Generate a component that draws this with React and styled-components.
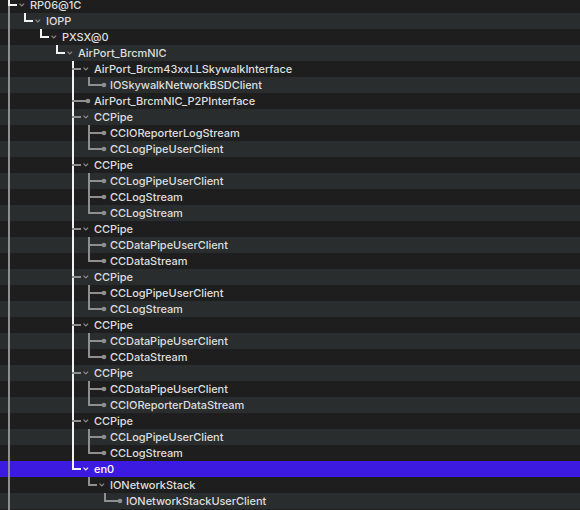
import React from "react";
import styled, { createGlobalStyle } from "styled-components";

const GlobalStyle = createGlobalStyle`
  html, body {
    margin: 0;
    padding: 0;
    background: #1e1e1e;
    overflow: hidden;
  }
  #root { width: 580px; height: 510px; overflow: hidden; }
`;

const WHITE = "#f2f2f2";
const GRAY = "#8f8f8f";

const tree = {
  name: "RP06@1C",
  hasMoreAfter: true,
  children: [
    {
      name: "IOPP",
      children: [
        {
          name: "PXSX@0",
          children: [
            {
              name: "AirPort_BrcmNIC",
              children: [
                { name: "AirPort_Brcm43xxLLSkywalkInterface", children: [{ name: "IOSkywalkNetworkBSDClient" }] },
                { name: "AirPort_BrcmNIC_P2PInterface" },
                { name: "CCPipe", children: [{ name: "CCIOReporterLogStream" }, { name: "CCLogPipeUserClient" }] },
                { name: "CCPipe", children: [{ name: "CCLogPipeUserClient" }, { name: "CCLogStream" }, { name: "CCLogStream" }] },
                { name: "CCPipe", children: [{ name: "CCDataPipeUserClient" }, { name: "CCDataStream" }] },
                { name: "CCPipe", children: [{ name: "CCLogPipeUserClient" }, { name: "CCLogStream" }] },
                { name: "CCPipe", children: [{ name: "CCDataPipeUserClient" }, { name: "CCDataStream" }] },
                { name: "CCPipe", children: [{ name: "CCDataPipeUserClient" }, { name: "CCIOReporterDataStream" }] },
                { name: "CCPipe", children: [{ name: "CCLogPipeUserClient" }, { name: "CCLogStream" }] },
                {
                  name: "en0",
                  selected: true,
                  children: [{ name: "IONetworkStack", children: [{ name: "IONetworkStackUserClient" }] }],
                },
              ],
            },
          ],
        },
      ],
    },
  ],
};

function flatten() {
  const rows = [];
  const walk = (node, depth, parent, index, siblings, ancestors) => {
    const n = {
      name: node.name,
      depth,
      parent,
      index,
      leaf: !node.children,
      selected: !!node.selected,
      hasLater: node.hasMoreAfter || index < siblings - 1,
      ancestors,
    };
    rows.push(n);
    (node.children || []).forEach((c, i, arr) =>
      walk(c, depth + 1, n, i, arr.length, [...ancestors, n])
    );
  };
  walk(tree, 0, null, 0, 2, []);
  return rows;
}

const rows = flatten();
const sel = rows.find((r) => r.selected);
const path = [...sel.ancestors, sel];

const laterOnPath = (node) => {
  const p = path[node.depth];
  return p && p !== node && p.parent === node.parent && p.index > node.index;
};

const List = styled.div`
  display: flex;
  flex-direction: column;
  margin-top: -3px;
  font-family: Inter, "Liberation Sans", sans-serif;
  font-size: 11px;
  font-weight: 500;
`;

const Row = styled.div`
  display: flex;
  align-items: center;
  height: 16px;
  flex: none;
  background: ${(p) => (p.$selected ? "#3d1adf" : p.$odd ? "#2a2d2d" : "#1e1e1e")};
`;

const Label = styled.span`
  color: ${(p) => (p.$selected ? "#ffffff" : "#dedede")};
  line-height: 16px;
  white-space: nowrap;
  letter-spacing: -0.04px;
`;

const col = (k) => 8 + 16 * k;

function Guides({ row, filler }) {
  const d = filler ? 0 : row.depth;
  const w = 30 + 16 * d;
  const parts = [];
  if (filler) {
    parts.push(<rect key="f" x={col(0)} y={0} width={2} height={16} fill={GRAY} />);
    return (
      <svg width={w} height={16} style={{ flex: "none", display: "block" }}>
        {parts}
      </svg>
    );
  }
  row.ancestors.forEach((a, k) => {
    if (a.hasLater) {
      parts.push(
        <rect key={"a" + k} x={col(k)} y={0} width={2} height={16} fill={laterOnPath(a) ? WHITE : GRAY} />
      );
    }
  });
  const x = col(d);
  const onPath = path[d] === row;
  const topWhite = onPath || laterOnPath(row);
  parts.push(<rect key="t" x={x} y={0} width={2} height={9} fill={topWhite ? WHITE : GRAY} />);
  if (row.hasLater) {
    parts.push(<rect key="b" x={x} y={9} width={2} height={7} fill={laterOnPath(row) ? WHITE : GRAY} />);
  }
  const hColor = onPath ? WHITE : GRAY;
  if (row.leaf) {
    parts.push(<rect key="h" x={x} y={7} width={14} height={2} fill={hColor} />);
    parts.push(<circle key="c" cx={x + 16} cy={8} r={2.3} fill={hColor} />);
  } else {
    parts.push(<rect key="h" x={x} y={7} width={9} height={2} fill={hColor} />);
    parts.push(
      <polyline
        key="v"
        points={`${x + 11.5},6.6 ${x + 13.8},9 ${x + 16.1},6.6`}
        fill="none"
        stroke={row.selected ? WHITE : "#8a8a8a"}
        strokeWidth={1.2}
      />
    );
  }
  return (
    <svg width={w} height={16} style={{ flex: "none", display: "block" }}>
      {parts}
    </svg>
  );
}

export default function App() {
  return (
    <>
      <GlobalStyle />
      <List>
        {rows.map((r, i) => (
          <Row key={i} $odd={i % 2 === 1} $selected={r.selected}>
            <Guides row={r} />
            <Label $selected={r.selected}>{r.name}</Label>
          </Row>
        ))}
        <Row $odd={false}>
          <Guides filler />
        </Row>
      </List>
    </>
  );
}
